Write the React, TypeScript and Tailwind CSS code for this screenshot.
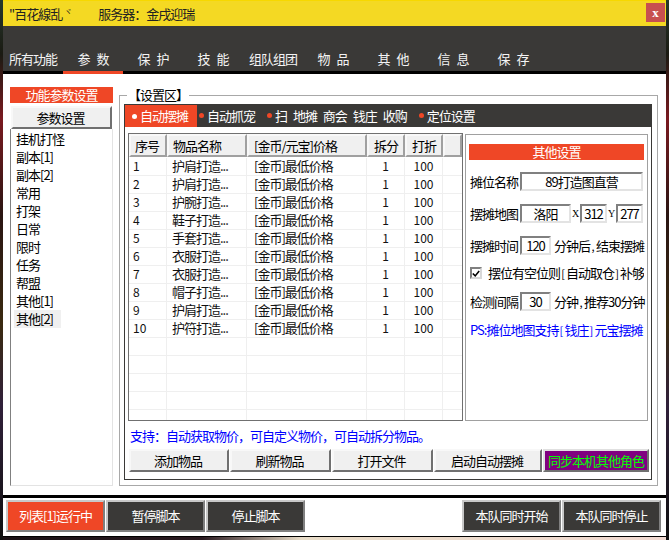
import React from "react";

const font = "font-['Noto_Sans_CJK_SC','Liberation_Sans',sans-serif]";
const darkBtn = "flex items-center justify-center bg-[#3a3937] text-white border-2 border-t-[#c8c8c8] border-l-[#c8c8c8] border-r-[#808080] border-b-[#808080]";
const lightBtn = "flex items-center justify-center pr-[2px] bg-[#f0f0f0] text-black border-2 border-t-[#f8f8f8] border-l-[#f8f8f8] border-r-[#707070] border-b-[#707070]";
const sunken = "flex items-center justify-center bg-white text-black border-2 border-t-[#808080] border-l-[#808080] border-r-[#e3e3e3] border-b-[#e3e3e3] leading-none";
const head = "flex items-center bg-[#f0f0f0] border-2 border-t-[#f8f8f8] border-l-[#f8f8f8] border-r-[#a0a0a0] border-b-[#a0a0a0] h-[23px] shrink-0";

const navs = ["所有功能", "参 数", "保 护", "技 能", "组队组团", "物 品", "其 他", "信 息", "保 存"];
const list = ["挂机打怪", "副本[1]", "副本[2]", "常用", "打架", "日常", "限时", "任务", "帮盟", "其他[1]", "其他[2]"];
const items = ["护肩打造...", "护肩打造...", "护腕打造...", "鞋子打造...", "手套打造...", "衣服打造...", "衣服打造...", "帽子打造...", "护肩打造...", "护符打造..."];
const rows = Array.from({ length: 15 }, (_, i) => i);
const cell = "flex items-center h-full pb-[2px] border-r border-[#efefef] shrink-0";

function Bullet({ white }: { white?: boolean }) {
  return <span className={`inline-block w-[5px] h-[5px] rounded-full mr-[3px] shrink-0 ${white ? "bg-white" : "bg-[#ef4726]"}`} />;
}

function C({ children }: { children: React.ReactNode }) {
  return <span className="inline-block w-[6px] text-center text-[11px] tracking-normal">{children}</span>;
}

export default function App() {
  return (
    <div className={`${font} relative w-[669px] h-[540px] overflow-hidden text-[13px] tracking-[-1px] leading-[18px] px-[3px] bg-[linear-gradient(180deg,#26382c_0%,#1a1a12_10%,#7a1a20_22%,#2a1512_40%,#3a2a10_60%,#30203a_75%,#101010_100%)]`}>
      <div className="w-[663px] h-[536px] flex flex-col bg-white">
        {/* Title */}
        <div className="h-[26px] shrink-0 bg-[#f4d923] border-t border-[#f7d800] flex items-center text-[#222] relative">
          <span className="ml-[6px]">"百花線乱</span>
          <span className="ml-[2px] text-[8px] leading-none mb-[3px]">ヾ</span>
          <span className="ml-[27px]">服务器：金戌迎瑞</span>
          <span className="absolute right-[1px] top-[2px] w-[19px] h-[19px] bg-[#c75050] text-white font-bold tracking-normal flex items-center justify-center font-['Liberation_Serif',serif]">x</span>
        </div>
        {/* Nav */}
        <div className="h-[48px] shrink-0 bg-[#3a3937] border-b-[3px] border-black flex items-end">
          {navs.map((n, i) => (
            <div key={n} className={`w-[60px] h-[28px] -mb-[3px] flex items-start pt-[4px] justify-center text-[#f4f4f4] [word-spacing:5px] ${i === 1 ? "border-b-[3px] border-[#ef4726]" : ""}`}>{n}</div>
          ))}
        </div>
        {/* Content */}
        <div className="h-[421px] shrink-0 flex pl-[7px]">
          {/* Left column */}
          <div className="w-[103px] shrink-0 mt-[13px] flex flex-col">
            <div className="h-[16px] bg-[#ef4726] text-white flex items-center justify-center">功能参数设置</div>
            <div className={`${lightBtn} h-[23px] mt-[3px] mx-[1px] border-t-[#808080] border-l-[#808080]`}>参数设置</div>
            <div className="w-[103px] h-[357px] border border-t-0 border-l-[#808080] border-r-[#e3e3e3] border-b-[#e3e3e3] pl-[3px] pt-[1px] flex flex-col items-start">
              {list.map((l, i) => (
                <div key={i} className={`h-[18px] px-[2px] flex items-center ${i === 10 ? "bg-[#f0f0f0] w-[47px]" : ""}`}>{l}</div>
              ))}
            </div>
          </div>
          {/* Group box */}
          <div className="relative w-[539px] h-[391px] ml-[6px] mt-[21px] shrink-0 border border-[#a8a8a8] pt-[8px] pl-[4px]">
            <span className="absolute left-[7px] -top-[10px] bg-white px-[1px] text-black">【设置区】</span>
            <div className="w-[528px] h-[376px] border border-t-0 border-[#3a3937] flex flex-col">
              {/* Tabs */}
              <div className="h-[23px] shrink-0 bg-[#3a3937] flex items-center text-white">
                <div className="w-[72px] h-[22px] mt-[1px] bg-[#ef4726] flex items-center pl-[7px]"><Bullet white />自动摆摊</div>
                <div className="ml-[2px] flex items-center"><Bullet />自动抓宠</div>
                <div className="ml-[12px] flex items-center [word-spacing:4px]"><Bullet />扫 地摊 商会 钱庄 收购</div>
                <div className="ml-[12px] flex items-center"><Bullet />定位设置</div>
              </div>
              {/* Body */}
              <div className="flex pl-[3px] pt-[6px]">
                <div className="w-[335px] h-[288px] shrink-0 border border-[#707070] flex flex-col overflow-hidden">
                  <div className="flex h-[23px] shrink-0">
                    <div className={`${head} w-[38px] justify-center pr-[2px]`}>序号</div>
                    <div className={`${head} w-[80px] pl-[4px]`}>物品名称</div>
                    <div className={`${head} w-[120px] pl-[5px]`}>[金币/元宝]价格</div>
                    <div className={`${head} w-[38px] justify-center`}>拆分</div>
                    <div className={`${head} w-[38px] justify-center`}>打折</div>
                    <div className={`${head} flex-1`} />
                  </div>
                  <div className="h-[1px] shrink-0 bg-white" />
                  {rows.map((r) => (
                    <div key={r} className="flex h-[18px] shrink-0 border-b border-[#efefef] text-[#111]">
                      <div className={`${cell} w-[38px] pl-[4px] text-[12px] tracking-normal`}>{r < 10 ? r + 1 : ""}</div>
                      <div className={`${cell} w-[80px] pl-[5px]`}>{items[r] ?? ""}</div>
                      <div className={`${cell} w-[120px] pl-[7px]`}>{r < 10 ? "[金币]最低价格" : ""}</div>
                      <div className={`${cell} w-[38px] justify-center text-[12px] tracking-normal`}>{r < 10 ? "1" : ""}</div>
                      <div className={`${cell} w-[38px] justify-center text-[12px] tracking-normal`}>{r < 10 ? "100" : ""}</div>
                    </div>
                  ))}
                </div>
                {/* Right settings */}
                <div className="w-[183px] h-[287px] mt-[1px] ml-[2px] shrink-0 border border-[#a0a0a0] px-[3px] pt-[9px] text-black overflow-hidden">
                  <div className="h-[16px] w-[175px] bg-[#ef4726] text-white flex items-center justify-center">其他设置</div>
                  <div className="flex items-center h-[19px] mt-[12px] pl-[1px]">
                    <span className="w-[50px] shrink-0">摊位名称</span>
                    <div className={`${sunken} w-[123px] h-[19px]`}>89打造图直营</div>
                  </div>
                  <div className="flex items-center h-[19px] mt-[13px] pl-[1px]">
                    <span className="w-[50px] shrink-0">摆摊地图</span>
                    <div className={`${sunken} w-[51px] h-[19px]`}>洛阳</div>
                    <span className="w-[9px] text-center text-[10px] tracking-normal font-['Liberation_Serif',serif]">X</span>
                    <div className={`${sunken} w-[27px] h-[19px]`}>312</div>
                    <span className="w-[9px] text-center text-[10px] tracking-normal font-['Liberation_Serif',serif]">Y</span>
                    <div className={`${sunken} w-[27px] h-[19px]`}>277</div>
                  </div>
                  <div className="flex items-center h-[19px] mt-[13px] pl-[1px] whitespace-nowrap">
                    <span className="w-[50px] shrink-0">摆摊时间</span>
                    <div className={`${sunken} w-[31px] h-[19px] shrink-0`}>120</div>
                    <span className="ml-[3px]">分钟后<C>,</C>结束摆摊</span>
                  </div>
                  <div className="flex items-center h-[18px] mt-[9px] w-[175px] overflow-hidden pl-[1px] whitespace-nowrap">
                    <div className="w-[12px] h-[12px] shrink-0 bg-white border-2 border-t-[#808080] border-l-[#808080] border-r-[#d8d8d8] border-b-[#d8d8d8] flex items-center justify-center">
                      <svg viewBox="0 0 10 10" className="w-[9px] h-[9px]"><path d="M1 5l3 3 5-6" fill="none" stroke="#000" strokeWidth="2" /></svg>
                    </div>
                    <span className="ml-[6px]">摆位有空位则<C>[</C>自动取仓<C>]</C>补够</span>
                  </div>
                  <div className="flex items-center h-[19px] mt-[10px] pl-[1px] whitespace-nowrap">
                    <span className="w-[50px] shrink-0">检测间隔</span>
                    <div className={`${sunken} w-[31px] h-[19px] shrink-0`}>30</div>
                    <span className="ml-[3px]">分钟<C>,</C>推荐30分钟</span>
                  </div>
                  <div className="mt-[10px] pl-[1px] text-[#0000ff] whitespace-nowrap">PS:摊位地图支持<C>[</C>钱庄<C>]</C>元宝摆摊</div>
                </div>
              </div>
              <div className="h-[18px] mt-[6px] pl-[5px] text-[#0000ff] flex items-center">支持：自动获取物价，可自定义物价，可自动拆分物品。</div>
              <div className="flex gap-[1px] pl-[4px] mt-[4px]">
                <div className={`${lightBtn} w-[100px] h-[23px]`}>添加物品</div>
                <div className={`${lightBtn} w-[101px] h-[23px]`}>刷新物品</div>
                <div className={`${lightBtn} w-[101px] h-[23px]`}>打开文件</div>
                <div className={`${lightBtn} w-[108px] h-[23px]`}>启动自动摆摊</div>
                <div className="flex items-center justify-center w-[106px] h-[23px] bg-[#800080] text-[#00ff00] border-2 border-[#e0e0e0] border-r-[#707070] border-b-[#707070]">同步本机其他角色</div>
              </div>
            </div>
          </div>
        </div>
        {/* Footer */}
        <div className="h-[41px] shrink-0 bg-white border-t-[3px] border-black flex pt-[2px] pl-[3px] pr-[5px]">
          <div className="h-[32px] w-[99px] bg-[#ef4726] text-white border-2 border-t-[#c8c8c8] border-l-[#c8c8c8] border-r-[#808080] border-b-[#808080] flex items-center justify-center">列表[1]运行中</div>
          <div className={`${darkBtn} h-[32px] w-[99px] ml-[1px]`}>暂停脚本</div>
          <div className={`${darkBtn} h-[32px] w-[99px] ml-[1px]`}>停止脚本</div>
          <div className={`${darkBtn} h-[32px] w-[99px] ml-auto`}>本队同时开始</div>
          <div className={`${darkBtn} h-[32px] w-[99px] ml-[1px]`}>本队同时停止</div>
        </div>
      </div>
      <div className="absolute left-[3px] bottom-0 w-[663px] h-[4px] bg-[linear-gradient(90deg,#1a1014_0%,#2a1a20_30%,#e8dcc8_45%,#f0d8d0_100%)] border-t border-black" />
    </div>
  );
}
